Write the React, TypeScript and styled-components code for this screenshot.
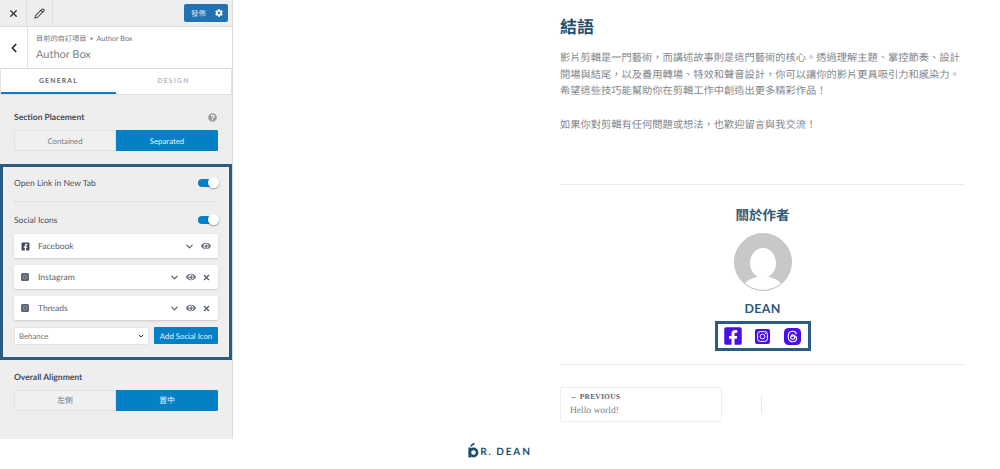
import styled, { createGlobalStyle } from "styled-components";
import { X, Pencil, ChevronLeft, ChevronDown } from "lucide-react";
import { FaFacebookSquare, FaEye, FaCog, FaQuestionCircle } from "react-icons/fa";

const SANS = `"Lato", "Noto Sans CJK TC", sans-serif`;
const SERIF = `"Liberation Serif", "Noto Sans CJK TC", serif`;

const GlobalStyle = createGlobalStyle`
  html, body {
    margin: 0;
    padding: 0;
    background: #fff;
    overflow: hidden;
    text-rendering: geometricPrecision;
  }
  * {
    box-sizing: border-box;
  }
`;

const socials = [
  { name: "Facebook", icon: "fb", removable: false },
  { name: "Instagram", icon: "ig", removable: true },
  { name: "Threads", icon: "th", removable: true },
];

const SmallGlyph = ({ kind }: { kind: string }) => {
  if (kind === "fb") return <FaFacebookSquare size={9} color="#3c4654" />;
  return (
    <svg width="8" height="8" viewBox="0 0 8 8">
      <rect width="8" height="8" rx="1.5" fill="#5d6570" />
      <circle cx="4" cy="4" r="2" fill="none" stroke="#9aa0a8" strokeWidth="0.8" />
    </svg>
  );
};

const InstagramIcon = () => (
  <svg width="15" height="15" viewBox="0 0 15 15">
    <rect width="15" height="15" rx="2" fill="#4a0fe8" />
    <rect x="2.6" y="2.6" width="9.8" height="9.8" rx="2.6" fill="none" stroke="#fff" strokeWidth="1" />
    <circle cx="7.5" cy="7.5" r="2.4" fill="none" stroke="#fff" strokeWidth="1" />
    <circle cx="10.6" cy="4.4" r="0.6" fill="#fff" />
  </svg>
);

const ThreadsIcon = () => (
  <svg width="17" height="17" viewBox="0 0 17 17">
    <rect width="17" height="17" rx="4.5" fill="#4a0fe8" />
    <path
      d="M12.4 6.2C11.9 4.3 10.5 3.3 8.6 3.3 5.8 3.3 4.2 5.3 4.2 8.5s1.6 5.2 4.4 5.2c2.3 0 4-1.3 4-3.1 0-1.7-1.4-2.7-3.4-2.7-1.5 0-2.5.7-2.5 1.8 0 1 .9 1.6 2 1.6 1.3 0 2.1-.8 2.1-2.2 0-1.5-.8-2.3-2-2.3-.8 0-1.4.3-1.8.9"
      fill="none"
      stroke="#fff"
      strokeWidth="1.1"
    />
  </svg>
);

const App = () => {
  return (
    <>
      <GlobalStyle />
      <Page>
        <Workspace>
          <Sidebar>
            <TopBar>
              <TopButton>
                <X size={11} strokeWidth={2.8} color="#2c3338" />
              </TopButton>
              <TopButton>
                <Pencil size={11} strokeWidth={2.2} color="#3c434a" />
              </TopButton>
              <PublishButton>
                <span>發佈</span>
                <FaCog size={8} color="#fff" />
              </PublishButton>
            </TopBar>
            <Header>
              <BackButton>
                <ChevronLeft size={14} strokeWidth={3} color="#23282d" />
              </BackButton>
              <HeaderText>
                <Crumb>目前的自訂項目 &nbsp;▪&nbsp; Author Box</Crumb>
                <HeaderTitle>Author Box</HeaderTitle>
              </HeaderText>
            </Header>
            <Tabs>
              <Tab $active>GENERAL</Tab>
              <Tab>DESIGN</Tab>
            </Tabs>
            <Section>
              <LabelRow>
                <Label>Section Placement</Label>
                <FaQuestionCircle size={9} color="#9b9b9b" />
              </LabelRow>
              <Segmented>
                <Segment>Contained</Segment>
                <Segment $active>Separated</Segment>
              </Segmented>
            </Section>
            <Highlight>
              <ToggleRow>
                <PlainLabel>Open Link in New Tab</PlainLabel>
                <Toggle />
              </ToggleRow>
              <Divider />
              <ToggleRow>
                <PlainLabel>Social Icons</PlainLabel>
                <Toggle />
              </ToggleRow>
              <SocialList>
                {socials.map((item) => (
                  <SocialCard key={item.name}>
                    <GlyphSlot>
                      <SmallGlyph kind={item.icon} />
                    </GlyphSlot>
                    <SocialName>{item.name}</SocialName>
                    <CardActions>
                      <ChevronDown size={11} strokeWidth={2.2} color="#4b5563" />
                      <FaEye size={10} color="#6b7280" />
                      {item.removable && <X size={9} strokeWidth={3} color="#4b5563" />}
                    </CardActions>
                  </SocialCard>
                ))}
              </SocialList>
              <AddRow>
                <SelectBox>
                  <span>Behance</span>
                  <ChevronDown size={8} strokeWidth={3} color="#333" />
                </SelectBox>
                <AddButton>Add Social Icon</AddButton>
              </AddRow>
            </Highlight>
            <Section $tight>
              <LabelRow>
                <Label>Overall Alignment</Label>
              </LabelRow>
              <Segmented>
                <Segment>左側</Segment>
                <Segment $active>置中</Segment>
              </Segmented>
            </Section>
          </Sidebar>
          <Preview>
            <Article>
              <Heading>結語</Heading>
              <Paragraph>
                影片剪輯是一門藝術，而講述故事則是這門藝術的核心。透過理解主題、掌控節奏、設計開場與結尾，以及善用轉場、特效和聲音設計，你可以讓你的影片更具吸引力和感染力。希望這些技巧能幫助你在剪輯工作中創造出更多精彩作品！
              </Paragraph>
              <Paragraph>如果你對剪輯有任何問題或想法，也歡迎留言與我交流！</Paragraph>
              <AuthorBox>
                <AuthorHeading>關於作者</AuthorHeading>
                <Avatar>
                  <svg width="56" height="56" viewBox="0 0 56 56">
                    <ellipse cx="28" cy="29" rx="13" ry="15" fill="#fff" />
                    <path d="M10 50C12 45 20 44 24 42h8C36 44 44 45 46 50A28 28 0 0 1 10 50z" fill="#fff" />
                  </svg>
                </Avatar>
                <AuthorName>DEAN</AuthorName>
                <IconFrame>
                  <IconSlot>
                    <FaFacebookSquare size={20} color="#4a0fe8" />
                  </IconSlot>
                  <IconSlot>
                    <InstagramIcon />
                  </IconSlot>
                  <IconSlot>
                    <ThreadsIcon />
                  </IconSlot>
                </IconFrame>
              </AuthorBox>
              <PostNav>
                <PrevCard>
                  <PrevLabel>← PREVIOUS</PrevLabel>
                  <PrevTitle>Hello world!</PrevTitle>
                </PrevCard>
                <NavRule />
              </PostNav>
            </Article>
          </Preview>
        </Workspace>
        <Footer>
          <LogoMark>
            <svg width="11" height="15" viewBox="0 0 11 15">
              <path d="M3 3.5C3.5 1.8 5 .8 6.5.6" fill="none" stroke="#1f4e6f" strokeWidth="1.6" />
              <circle cx="5.5" cy="9.5" r="3.6" fill="none" stroke="#1f4e6f" strokeWidth="2.6" />
              <rect x="0.4" y="4.5" width="2.6" height="10" fill="#1f4e6f" />
            </svg>
          </LogoMark>
          <LogoText>R. DEAN</LogoText>
        </Footer>
      </Page>
    </>
  );
};

export default App;

const Page = styled.div`
  width: 1000px;
  height: 469px;
  display: flex;
  flex-direction: column;
  font-family: ${SANS};
`;

const Workspace = styled.div`
  display: flex;
  height: 439px;
`;

const Sidebar = styled.aside`
  width: 233px;
  flex-shrink: 0;
  background: #eeeeee;
  border-right: 1px solid #dcdcde;
`;

const TopBar = styled.div`
  display: flex;
  align-items: center;
  height: 26px;
  padding-right: 4px;
`;

const TopButton = styled.div`
  width: 26px;
  height: 26px;
  display: flex;
  align-items: center;
  justify-content: center;
  border-right: 1px solid #e2e2e4;
  &:first-child {
    width: 27px;
  }
`;

const PublishButton = styled.div`
  margin-left: auto;
  width: 44px;
  height: 18px;
  padding: 0 5px 0 7px;
  display: flex;
  align-items: center;
  justify-content: space-between;
  background: #2271b1;
  border-radius: 2px;
  color: #d6e4ef;
  font-size: 7.5px;
`;

const Header = styled.div`
  display: flex;
  height: 43px;
  background: #fff;
  border-top: 1px solid #dcdcde;
  border-bottom: 1px solid #dcdcde;
`;

const BackButton = styled.div`
  width: 28px;
  display: flex;
  align-items: center;
  justify-content: center;
  border-right: 1px solid #e2e2e4;
`;

const HeaderText = styled.div`
  padding: 7px 0 0 8px;
`;

const Crumb = styled.div`
  font-size: 7.2px;
  line-height: 10px;
  color: #72777c;
`;

const HeaderTitle = styled.div`
  margin-top: 4px;
  font-size: 11px;
  line-height: 14px;
  color: #7d8186;
`;

const Tabs = styled.div`
  display: flex;
  height: 26px;
  background: #fff;
  border: 1px solid #dfe1e6;
  border-top: 0;
`;

const Tab = styled.div<{ $active?: boolean }>`
  flex: 1;
  display: flex;
  align-items: center;
  justify-content: center;
  font-size: 6.8px;
  font-weight: 700;
  letter-spacing: 1.2px;
  color: ${(p) => (p.$active ? "#5f6873" : "#b3b8be")};
  border-bottom: 2px solid ${(p) => (p.$active ? "#0f7fc4" : "transparent")};
`;

const Section = styled.div<{ $tight?: boolean }>`
  padding: ${(p) => (p.$tight ? "11px" : "16px")} 14px 0;
`;

const LabelRow = styled.div`
  display: flex;
  align-items: center;
  justify-content: space-between;
  height: 12px;
  padding-right: 1px;
  margin-bottom: 7px;
`;

const Label = styled.div`
  font-size: 8.5px;
  font-weight: 700;
  color: #454d5a;
`;

const Segmented = styled.div`
  display: flex;
  height: 21px;
  border-radius: 2px;
  overflow: hidden;
`;

const Segment = styled.div<{ $active?: boolean }>`
  flex: 1;
  display: flex;
  align-items: center;
  justify-content: center;
  font-size: 7.8px;
  color: ${(p) => (p.$active ? "#e8f3fa" : "#747b84")};
  background: ${(p) => (p.$active ? "#0580c7" : "#f0f0f0")};
  border: 1px solid ${(p) => (p.$active ? "#0580c7" : "#dfe1e5")};
`;

const Highlight = styled.div`
  height: 196px;
  margin-top: 13px;
  padding: 9px 11px 0;
  border: 3px solid #2a5b80;
`;

const ToggleRow = styled.div`
  display: flex;
  align-items: center;
  justify-content: space-between;
  height: 14px;
`;

const PlainLabel = styled.div`
  font-size: 8.5px;
  color: #4a525f;
`;

const Toggle = styled.div`
  position: relative;
  width: 20px;
  height: 8px;
  border-radius: 4px;
  background: #0580c7;
  &::after {
    content: "";
    position: absolute;
    right: -1px;
    top: -2px;
    width: 11px;
    height: 11px;
    border-radius: 50%;
    background: #fff;
    box-shadow: 0 1px 2px rgba(0, 0, 0, 0.35);
  }
`;

const Divider = styled.div`
  margin: 11px 0 11px;
  border-top: 1px dotted #d5d5d5;
`;

const SocialList = styled.div`
  margin-top: 7px;
  display: flex;
  flex-direction: column;
  gap: 7px;
`;

const SocialCard = styled.div`
  height: 24px;
  display: flex;
  align-items: center;
  padding: 0 7px 0 7px;
  background: #fff;
  border-radius: 2px;
  box-shadow: 0 1px 2px rgba(0, 0, 0, 0.15);
`;

const GlyphSlot = styled.div`
  width: 17px;
  display: flex;
  align-items: center;
`;

const SocialName = styled.div`
  font-size: 8.5px;
  color: #5b6472;
`;

const CardActions = styled.div`
  margin-left: auto;
  display: flex;
  align-items: center;
  gap: 6px;
`;

const AddRow = styled.div`
  display: flex;
  align-items: flex-start;
  justify-content: space-between;
  margin-top: 7px;
`;

const SelectBox = styled.div`
  width: 135px;
  height: 18px;
  padding: 0 3px 0 4px;
  display: flex;
  align-items: center;
  justify-content: space-between;
  background: #fff;
  border: 1px solid #e2e4e7;
  border-radius: 2px;
  font-size: 7.8px;
  color: #70767f;
`;

const AddButton = styled.div`
  width: 64px;
  height: 17px;
  display: flex;
  align-items: center;
  justify-content: center;
  background: #0580c7;
  border-radius: 1px;
  font-size: 7.8px;
  color: #e8f3fa;
`;

const Preview = styled.main`
  flex: 1;
  padding: 16px 35px 0 327px;
  overflow: hidden;
`;

const Article = styled.article`
  width: 405px;
`;

const Heading = styled.h2`
  margin: 0 0 12px;
  font-size: 17px;
  line-height: 22px;
  font-weight: 700;
  color: #1f4e6f;
`;

const Paragraph = styled.p`
  margin: 0 0 16.5px;
  font-size: 10.25px;
  line-height: 16.7px;
  color: #83878c;
`;

const AuthorBox = styled.section`
  margin-top: 51px;
  padding-top: 21px;
  padding-bottom: 13px;
  display: flex;
  flex-direction: column;
  align-items: center;
  border-top: 1px solid #e8eaed;
  border-bottom: 1px solid #e8eaed;
`;

const AuthorHeading = styled.h3`
  margin: 0 0 9px;
  font-size: 13.5px;
  line-height: 18px;
  font-weight: 700;
  color: #355a76;
`;

const Avatar = styled.div`
  width: 58px;
  height: 58px;
  border-radius: 50%;
  background: #c8c8c8;
  border: 1px solid #bfc6cc;
  overflow: hidden;
`;

const AuthorName = styled.div`
  margin-top: 10px;
  font-size: 12.5px;
  line-height: 16px;
  font-weight: 700;
  letter-spacing: 0.3px;
  color: #2c5878;
`;

const IconFrame = styled.div`
  margin-top: 4px;
  width: 96px;
  height: 30px;
  display: flex;
  align-items: center;
  border: 3px solid #2a5b80;
`;

const IconSlot = styled.div`
  width: 30px;
  display: flex;
  align-items: center;
  justify-content: center;
`;

const PostNav = styled.nav`
  display: flex;
  align-items: center;
  margin-top: 22px;
`;

const PrevCard = styled.div`
  width: 162px;
  height: 35px;
  padding: 3px 9px;
  border: 1px solid #eceef1;
  border-radius: 2px;
  font-family: ${SERIF};
`;

const PrevLabel = styled.div`
  font-size: 7.5px;
  line-height: 12px;
  font-weight: 700;
  letter-spacing: 0.2px;
  color: #5f6670;
`;

const PrevTitle = styled.div`
  margin-top: 2px;
  font-size: 9.5px;
  line-height: 13px;
  color: #7b7f85;
`;

const NavRule = styled.div`
  width: 1px;
  height: 19px;
  margin-left: 39px;
  background: #e6e8ee;
`;

const Footer = styled.footer`
  height: 30px;
  display: flex;
  align-items: center;
  justify-content: center;
  padding-bottom: 4px;
`;

const LogoMark = styled.div`
  display: flex;
  margin-top: -3px;
`;

const LogoText = styled.div`
  margin-left: 1px;
  font-size: 10px;
  font-weight: 700;
  letter-spacing: 1.9px;
  word-spacing: -1px;
  color: #1f4e6f;
`;
